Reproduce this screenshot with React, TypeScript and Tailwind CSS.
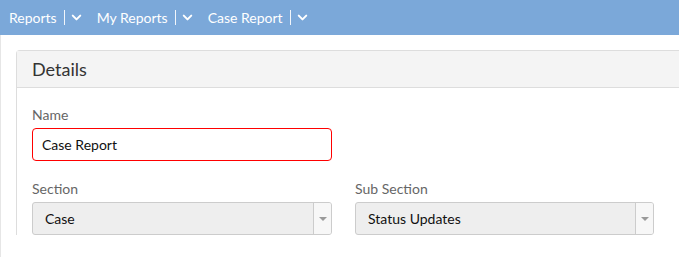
import { ChevronDown } from 'lucide-react';

const crumbs = ['Reports', 'My Reports', 'Case Report'];

const Crumb = ({ label }: { label: string }) => (
  <div className="flex items-center">
    <span className="text-white text-[14px]">{label}</span>
    <span className="ml-[7px] h-[15px] w-px bg-white/90" />
    <ChevronDown className="ml-[4px] w-[15px] h-[15px] text-white" strokeWidth={3.2} />
  </div>
);

const SelectBox = ({ value, width }: { value: string; width: string }) => (
  <div className={`flex h-[33px] ${width} rounded-[3px] border border-[#cccccc] bg-[#eeeeee] overflow-hidden`}>
    <div className="flex-1 flex items-center pl-[12px] text-[14px] text-[#111]">{value}</div>
    <div className="w-[18px] border-l border-[#cccccc] bg-[#f7f7f7] flex items-center justify-center">
      <svg width="8" height="4" viewBox="0 0 8 4">
        <path d="M0 0 L8 0 L4 4 Z" fill="#9a9a9a" />
      </svg>
    </div>
  </div>
);

export default function App() {
  return (
    <div className="w-[679px] h-[257px] overflow-hidden bg-white" style={{ fontFamily: 'Lato, "Open Sans", sans-serif' }}>
      <div className="h-[35px] bg-[#7ba8d9] flex items-center pl-[9px] gap-[13px]">
        {crumbs.map((c) => (
          <Crumb key={c} label={c} />
        ))}
      </div>
      <div className="border-l border-[#e6e6e6] pl-[15px] pt-[15px] h-[222px]">
        <div className="w-[700px] border-l border-t border-[#dddddd] rounded-tl-[4px]">
          <div className="h-[37px] bg-[#f4f4f4] border-b border-[#dddddd] flex items-center pl-[15px] text-[18px] text-[#333]">
            Details
          </div>
          <div className="pl-[15px] pt-[17px]">
            <div className="text-[14px] text-[#666] leading-[20px]">Name</div>
            <div className="mt-[3px] w-[300px] h-[33px] rounded-[4px] border border-[#ff0000] flex items-center pl-[9px] text-[14px] text-[#111]">
              Case Report
            </div>
            <div className="flex gap-[23px] mt-[18px]">
              <div>
                <div className="text-[14px] text-[#666] leading-[20px]">Section</div>
                <div className="mt-[3px]">
                  <SelectBox value="Case" width="w-[300px]" />
                </div>
              </div>
              <div>
                <div className="text-[14px] text-[#666] leading-[20px]">Sub Section</div>
                <div className="mt-[3px]">
                  <SelectBox value="Status Updates" width="w-[299px]" />
                </div>
              </div>
            </div>
          </div>
        </div>
      </div>
    </div>
  );
}
